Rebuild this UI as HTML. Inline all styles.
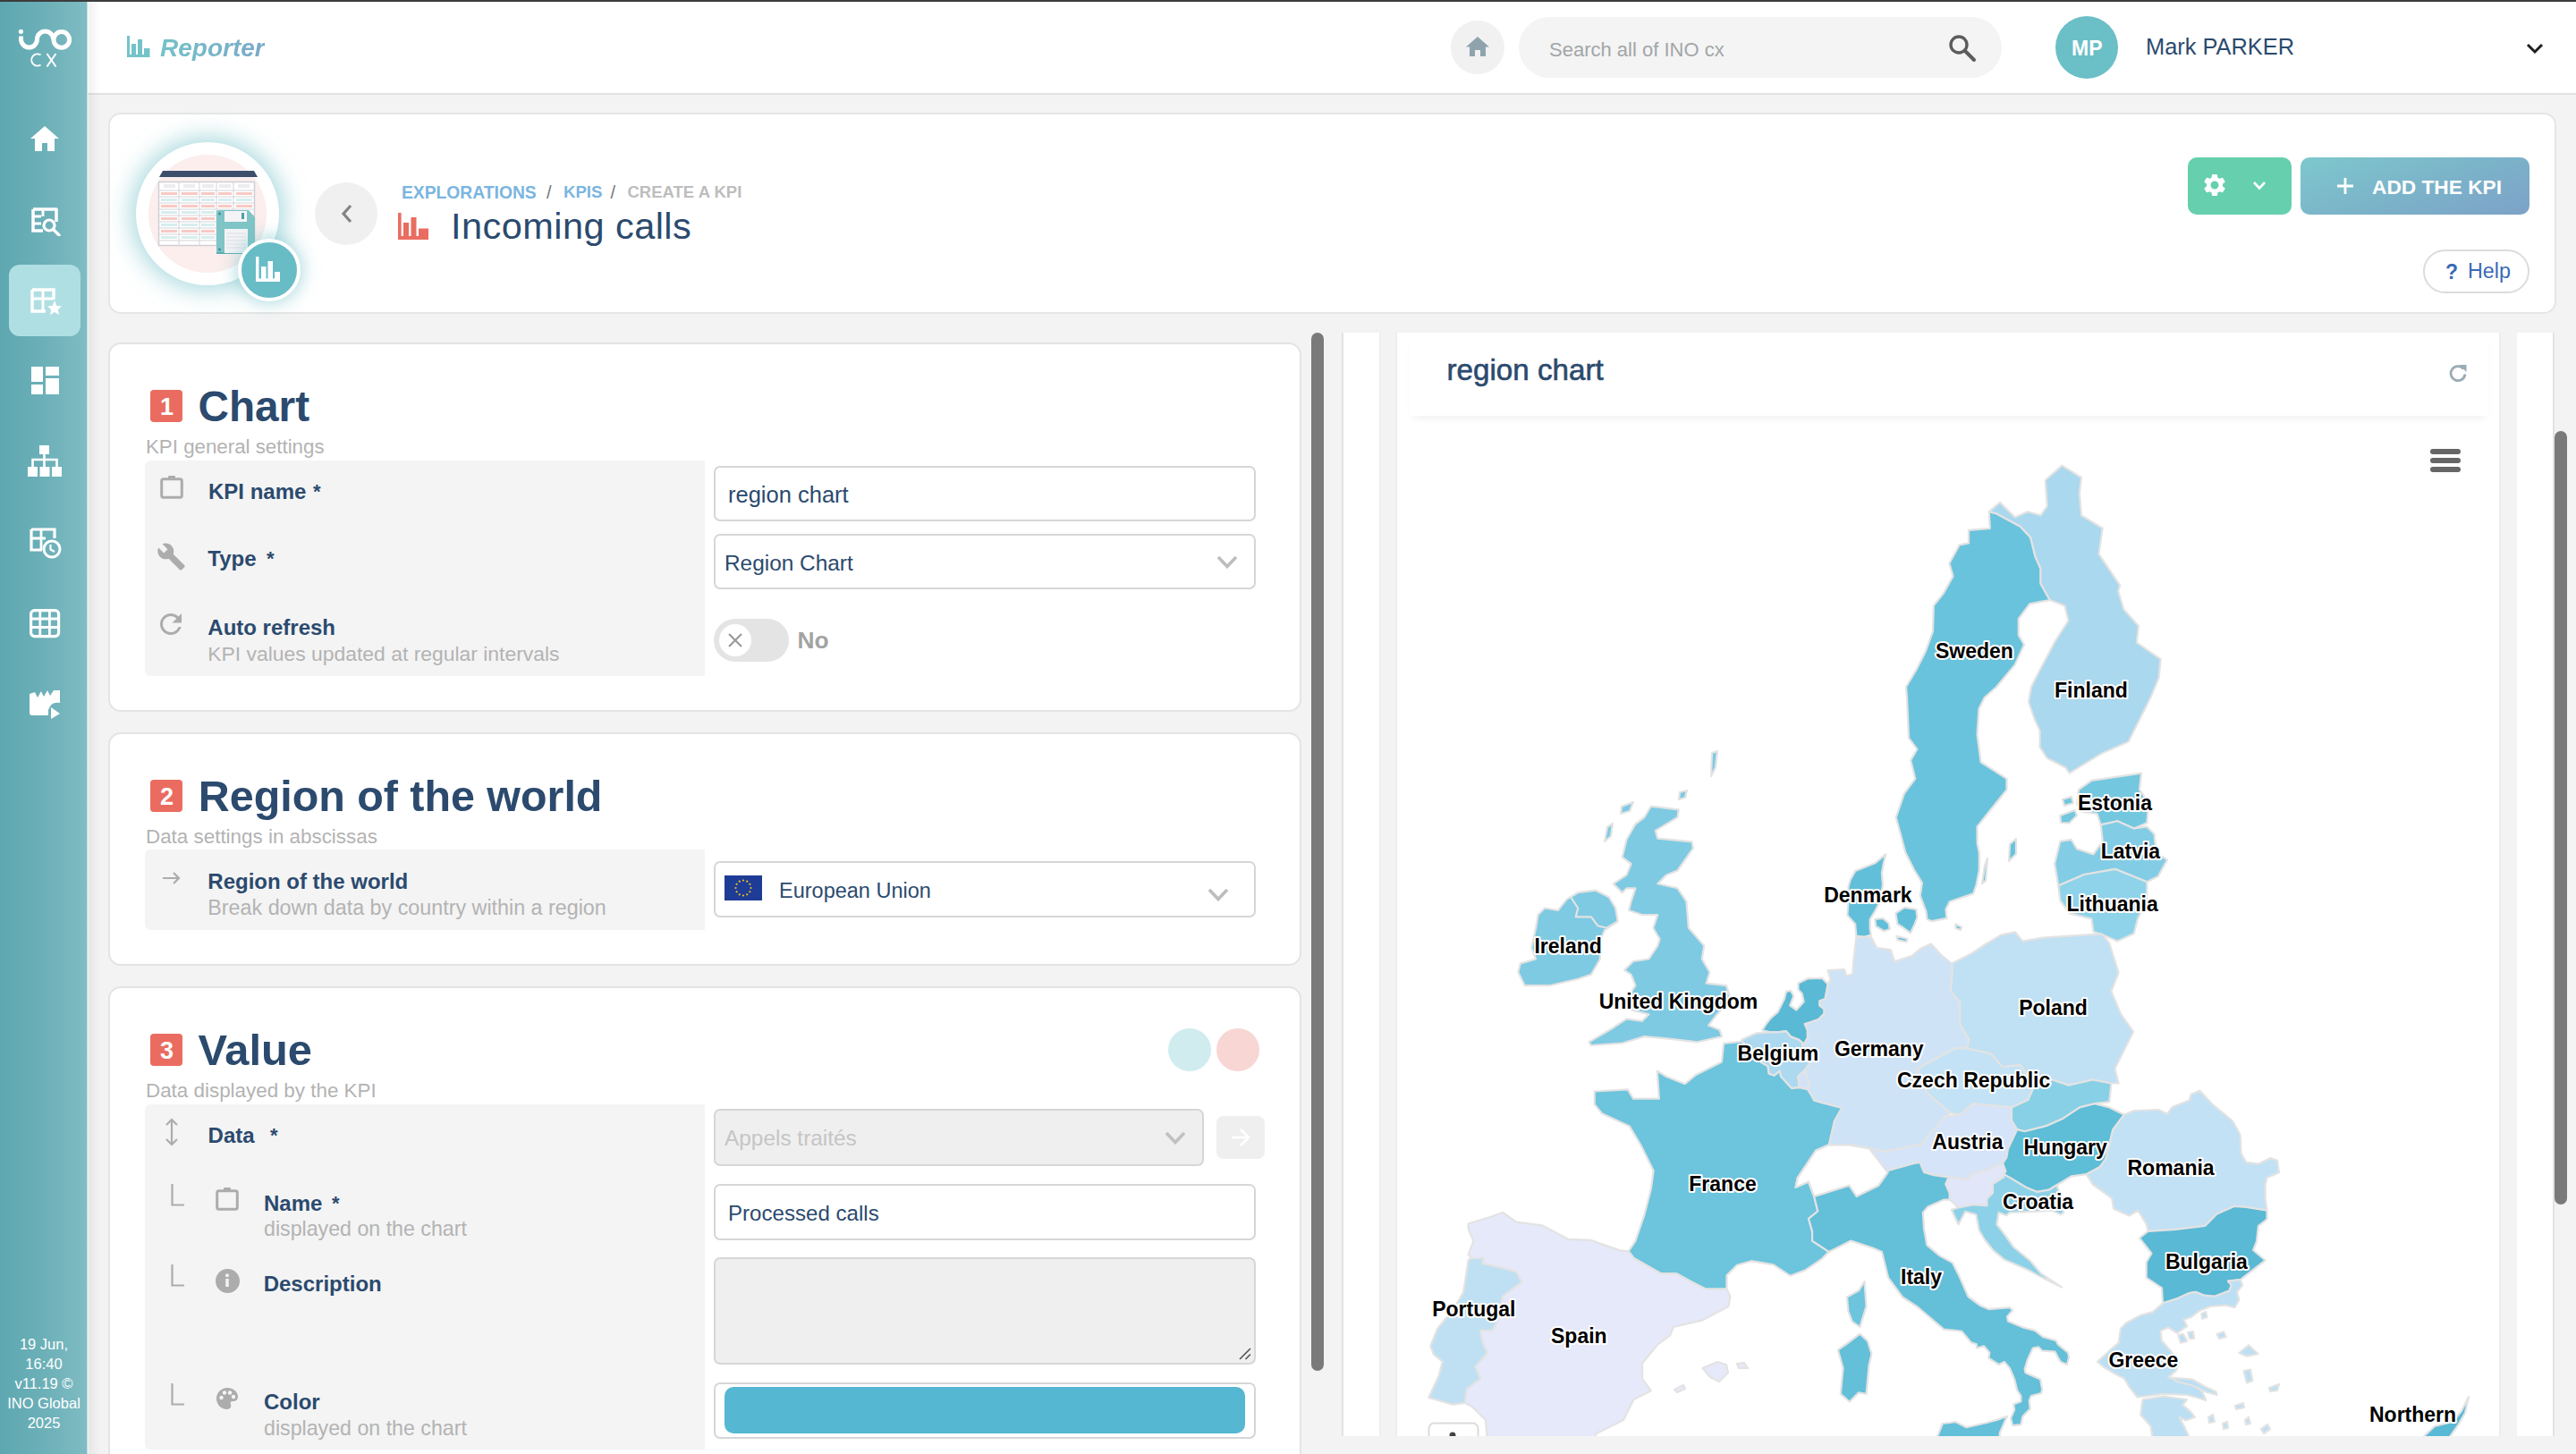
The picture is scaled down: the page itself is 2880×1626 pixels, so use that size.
<!DOCTYPE html><html><head><meta charset="utf-8"><style>
html,body{margin:0;padding:0;}
body{width:2880px;height:1626px;overflow:hidden;position:relative;background:#f3f3f3;font-family:"Liberation Sans",sans-serif;}
.a{position:absolute;box-sizing:border-box;}
.t{position:absolute;white-space:nowrap;line-height:1;}
</style></head><body><div class="a" style="left:0.0px;top:0.0px;width:2880.0px;height:2.0px;background:#3c3c3c"></div><div class="a" style="left:98.0px;top:2.0px;width:2782.0px;height:102.0px;background:#fff"></div><div class="a" style="left:98.0px;top:104.0px;width:2782.0px;height:2.0px;background:#e2e2e2"></div><div class="a" style="left:98.0px;top:2.0px;width:14.0px;height:1624.0px;background:linear-gradient(to right,rgba(0,0,0,0.06),rgba(0,0,0,0))"></div><div class="a" style="left:0.0px;top:2.0px;width:98.0px;height:1624.0px;background:linear-gradient(to right,#5ea7b0 0%,#6cb0b8 50%,#80bcc3 100%)"></div><div class="a" style="left:97.0px;top:2.0px;width:2.0px;height:1624.0px;background:rgba(255,255,255,0.5)"></div><svg class="a" style="left:10px;top:25px;" width="80" height="60" viewBox="10 25 80 60">
<g fill="none" stroke="#fff" stroke-width="5">
<path d="M23.5 40.5 V44 A9 9 0 0 0 41.5 44 A9 9 0 0 1 59.5 44" />
<circle cx="68.8" cy="44.4" r="8.8"/>
</g>
<circle cx="23.4" cy="35.3" r="2.6" fill="#fff"/>
<path d="M45.5 61.5 A6.6 6.6 0 1 0 45.5 72.5" fill="none" stroke="#fff" stroke-width="2"/>
<path d="M52.5 60 L62.5 74.5 M62.5 60 L52.5 74.5" stroke="#fff" stroke-width="2"/>
</svg><svg class="a" style="left:33px;top:140px;" width="34" height="30" viewBox="0 0 34 30"><path d="M17 1 L33 15 L28 15 L28 29 L20 29 L20 20 L14 20 L14 29 L6 29 L6 15 L1 15 Z" fill="#fff"/></svg><svg class="a" style="left:34px;top:231px;" width="34" height="33" viewBox="0 0 34 33"><path d="M3 3 H29 V17" fill="none" stroke="#fff" stroke-width="3.5" stroke-linejoin="round"/>
<path d="M3 3 V27 H14" fill="none" stroke="#fff" stroke-width="3.5"/>
<path d="M3 11 H12 M3 19 H12 M14 3 V11" stroke="#fff" stroke-width="3"/>
<circle cx="21" cy="21" r="6" fill="none" stroke="#fff" stroke-width="3.2"/>
<path d="M25.5 25.5 L32 32" stroke="#fff" stroke-width="3.4" stroke-linecap="round"/></svg><div class="a" style="left:10.0px;top:296.0px;width:80.0px;height:80.0px;background:#b0dfe3;border-radius:12px"></div><svg class="a" style="left:33px;top:321px;" width="36" height="32" viewBox="0 0 36 32"><path d="M3 3 H27 V14" fill="none" stroke="#fff" stroke-width="3.4"/>
<path d="M3 3 V27 H18" fill="none" stroke="#fff" stroke-width="3.4"/>
<path d="M3 13 H27 M15 3 V27" stroke="#fff" stroke-width="3"/>
<path d="M28 15 L30.4 21 L36 21.5 L31.8 25.3 L33 31 L28 28 L23 31 L24.2 25.3 L20 21.5 L25.6 21 Z" fill="#fff"/></svg><svg class="a" style="left:35px;top:410px;" width="31" height="32" viewBox="0 0 31 32"><rect x="0" y="0" width="13" height="17" fill="#fff"/><rect x="16" y="0" width="15" height="10" fill="#fff"/><rect x="0" y="20" width="13" height="11" fill="#fff"/><rect x="16" y="13" width="15" height="18" fill="#fff"/></svg><svg class="a" style="left:31px;top:498px;" width="38" height="36" viewBox="0 0 38 36"><rect x="13" y="0" width="11" height="10" fill="#fff"/>
<rect x="0" y="24" width="11" height="11" fill="#fff"/><rect x="13.5" y="24" width="11" height="11" fill="#fff"/><rect x="27" y="24" width="11" height="11" fill="#fff"/>
<path d="M18.5 9 V24 M5.5 24 V16 H32.5 V24" fill="none" stroke="#fff" stroke-width="2.6"/></svg><svg class="a" style="left:33px;top:590px;" width="36" height="35" viewBox="0 0 36 35"><path d="M2 2 H28 V12" fill="none" stroke="#fff" stroke-width="3.2"/>
<path d="M2 2 V25 H14" fill="none" stroke="#fff" stroke-width="3.2"/>
<path d="M2 12 H18 M13 2 V25" stroke="#fff" stroke-width="2.8"/>
<circle cx="25" cy="24" r="9" fill="none" stroke="#fff" stroke-width="3"/>
<path d="M23.5 19 V24.5 L28 27" fill="none" stroke="#fff" stroke-width="2.2"/></svg><svg class="a" style="left:33px;top:681px;" width="35" height="33" viewBox="0 0 35 33"><rect x="1.6" y="1.6" width="31" height="29" rx="4" fill="none" stroke="#fff" stroke-width="3.2"/>
<path d="M1.6 11 H32.6 M1.6 20.5 H32.6 M11.8 1.6 V30.6 M22.4 1.6 V30.6" stroke="#fff" stroke-width="2.8"/></svg><svg class="a" style="left:33px;top:772px;" width="35" height="32" viewBox="0 0 35 32"><path d="M0 4 L6 2 L9 8 L13 1 L16 7 L20 0 L23 6 L27 0 L34 0 L34 14 Q24 12 21 22 L21 28 L3 28 Q0 28 0 25 Z" fill="#fff"/>
<path d="M24 19 L34 26 L24 32 Z" fill="#fff"/></svg><div class="t" style="left:0;width:98px;text-align:center;top:1495.1px;font-size:16.5px;color:#fff">19 Jun,</div><div class="t" style="left:0;width:98px;text-align:center;top:1517.0px;font-size:16.5px;color:#fff">16:40</div><div class="t" style="left:0;width:98px;text-align:center;top:1538.9px;font-size:16.5px;color:#fff">v11.19 ©</div><div class="t" style="left:0;width:98px;text-align:center;top:1560.8px;font-size:16.5px;color:#fff">INO Global</div><div class="t" style="left:0;width:98px;text-align:center;top:1582.7px;font-size:16.5px;color:#fff">2025</div><svg class="a" style="left:142px;top:40px;" width="26" height="24" viewBox="0 0 26 24"><path d="M0 0 H3 V21 H5 V9 H10 V21 H12 V4 H17 V21 H19 V14 H25.5 V24 H0 Z" fill="#73c3c9"/></svg><div class="t" style="left:179px;top:39.8px;font-size:28px;font-weight:bold;font-style:italic;background:linear-gradient(to right,#74c2c8,#7aa8c9);-webkit-background-clip:text;background-clip:text;color:transparent;">Reporter</div><div class="a" style="left:1622.0px;top:23.0px;width:60.0px;height:60.0px;background:#f1f1f1;border-radius:50%"></div><svg class="a" style="left:1639px;top:41px;" width="26" height="22" viewBox="0 0 26 22"><path d="M13 0 L26 11.5 L22 11.5 L22 22 L16 22 L16 15 L10 15 L10 22 L4 22 L4 11.5 L0 11.5 Z" fill="#8fa3ad"/></svg><div class="a" style="left:1698.0px;top:19.0px;width:540.0px;height:68.0px;background:#f4f4f4;border-radius:34px"></div><div class="t" style="left:1732.0px;top:44.9px;font-size:22.00px;font-weight:normal;color:#a2a6a8;">Search all of INO cx</div><svg class="a" style="left:2178px;top:38px;" width="32" height="32" viewBox="0 0 32 32"><circle cx="12" cy="12" r="9" fill="none" stroke="#5c5c5c" stroke-width="3.4"/><path d="M18.5 18.5 L29 29" stroke="#5c5c5c" stroke-width="4" stroke-linecap="round"/></svg><div class="a" style="left:2298.0px;top:18.0px;width:70.0px;height:70.0px;background:#6bbfc7;border-radius:50%"></div><div class="t" style="left:2316.0px;top:42.9px;font-size:23.00px;font-weight:bold;color:#fff;">MP</div><div class="t" style="left:2399.0px;top:40.2px;font-size:25.40px;font-weight:normal;color:#2b4a6e;">Mark PARKER</div><svg class="a" style="left:2824px;top:47px;" width="20" height="14" viewBox="0 0 20 14"><path d="M2 3 L10 11 L18 3" fill="none" stroke="#1e1e1e" stroke-width="3"/></svg><div class="a" style="left:121.0px;top:126.0px;width:2737.0px;height:225.0px;background:#fff;border:2px solid #e6e6e6;border-radius:14px"></div><div class="a" style="left:152.0px;top:159.0px;width:160.0px;height:160.0px;background:#fff;border-radius:50%;box-shadow:0 0 26px 6px rgba(104,188,197,0.55)"></div><div class="a" style="left:166.0px;top:173.0px;width:132.0px;height:132.0px;background:#fbeeed;border-radius:50%"></div><svg class="a" style="left:174px;top:188px;" width="114" height="100" viewBox="0 0 114 100">
<path d="M8 3 H110 L114 10 H4 Z" fill="#3d4f6b"/>
<rect x="3.5" y="15.5" width="107" height="71" fill="#fff" stroke="#cfcfd6" stroke-width="1.5"/>
<g stroke="#d4d4da" stroke-width="1">
<path d="M26 15 V87 M49 15 V87 M68 15 V87 M87 15 V87"/>
<path d="M3 25 H111 M3 32 H111 M3 39 H111 M3 46 H111 M3 53 H111 M3 60 H111 M3 67 H111 M3 74 H111 M3 81 H111"/>
</g>
<g fill="#ececf0"><rect x="9" y="18" width="13" height="4"/><rect x="31" y="18" width="13" height="4"/><rect x="52" y="18" width="13" height="4"/><rect x="71" y="18" width="13" height="4"/><rect x="92" y="18" width="13" height="4"/></g>
<g fill="#f7c9c4"><rect x="6" y="27" width="18" height="3"/><rect x="29" y="27" width="18" height="3"/><rect x="51" y="27" width="15" height="3"/><rect x="70" y="27" width="15" height="3"/><rect x="90" y="27" width="18" height="3"/>
<rect x="6" y="41" width="18" height="3"/><rect x="29" y="41" width="18" height="3"/><rect x="51" y="41" width="15" height="3"/><rect x="70" y="41" width="15" height="3"/><rect x="90" y="41" width="18" height="3"/>
<rect x="6" y="55" width="18" height="3"/><rect x="29" y="55" width="18" height="3"/><rect x="51" y="55" width="15" height="3"/>
<rect x="6" y="69" width="18" height="3"/><rect x="29" y="69" width="18" height="3"/><rect x="51" y="69" width="15" height="3"/></g>
<g fill="#d7eeef"><rect x="6" y="34" width="18" height="3"/><rect x="29" y="34" width="18" height="3"/><rect x="51" y="34" width="15" height="3"/><rect x="70" y="34" width="15" height="3"/><rect x="90" y="34" width="18" height="3"/>
<rect x="6" y="48" width="18" height="3"/><rect x="29" y="48" width="18" height="3"/><rect x="51" y="48" width="15" height="3"/>
<rect x="6" y="62" width="18" height="3"/><rect x="29" y="62" width="18" height="3"/><rect x="51" y="62" width="15" height="3"/>
<rect x="6" y="76" width="18" height="3"/><rect x="29" y="76" width="18" height="3"/><rect x="51" y="76" width="15" height="3"/></g>
<path d="M68 49 Q68 47 70 47 H104 L111 55 V94 Q111 96 109 96 H70 Q68 96 68 94 Z" fill="#7fc4c6"/>
<path d="M68 94 H111 V96 H68 Z" fill="#5aaeb2"/>
<rect x="77" y="48" width="25" height="12" fill="#f4f4f6"/><rect x="96" y="50" width="3" height="7" fill="#4e9ea3"/>
<rect x="77" y="68" width="26" height="27" fill="#f4f4f6"/>
<g stroke="#dcdce2" stroke-width="0.8"><path d="M79 73 H101 M79 77 H101 M79 81 H101 M79 85 H101 M79 89 H101"/></g>
<circle cx="71.5" cy="51" r="1.5" fill="#3f8f94"/><circle cx="71.5" cy="91" r="1.5" fill="#3f8f94"/>
</svg><div class="a" style="left:266.0px;top:267.0px;width:70.0px;height:70.0px;background:#68bcc5;border:4px solid #fff;border-radius:50%;box-shadow:0 0 18px 3px rgba(104,188,197,0.5)"></div><svg class="a" style="left:286px;top:287px;" width="30" height="28" viewBox="0 0 30 28"><path d="M0 0 H3.4 V24.5 H6 V11 H11.5 V24.5 H13.5 V5 H19 V24.5 H21 V17 H27 V28 H0 Z" fill="#fff"/></svg><div class="a" style="left:352.0px;top:204.0px;width:70.0px;height:70.0px;background:#f0f0f0;border-radius:50%"></div><svg class="a" style="left:380px;top:228px;" width="16" height="22" viewBox="0 0 16 22"><path d="M12 2 L4 11 L12 20" fill="none" stroke="#838383" stroke-width="3.2"/></svg><div class="t" style="left:449.0px;top:205.5px;font-size:19.30px;font-weight:bold;color:#7ab5df;">EXPLORATIONS</div><div class="t" style="left:611.0px;top:204.9px;font-size:20.00px;font-weight:normal;color:#767676;">/</div><div class="t" style="left:630.0px;top:206.1px;font-size:18.60px;font-weight:bold;color:#7ab5df;">KPIS</div><div class="t" style="left:682.5px;top:204.9px;font-size:20.00px;font-weight:normal;color:#767676;">/</div><div class="t" style="left:701.5px;top:206.1px;font-size:18.50px;font-weight:bold;color:#bdbdbd;">CREATE A KPI</div><svg class="a" style="left:445px;top:238px;" width="35" height="31" viewBox="0 0 35 31"><path d="M0 0 H3.6 V26 H6 V11 H12 V26 H14.5 V5 H20.5 V26 H23 V17.5 H34 V30 H0 Z" fill="#ea6c60"/></svg><div class="t" style="left:504.0px;top:232.3px;font-size:41.50px;font-weight:normal;color:#2b4a6e;letter-spacing:0.45px;">Incoming calls</div><div class="a" style="left:2446.0px;top:176.0px;width:116.0px;height:64.0px;background:#65cfae;border-radius:10px"></div><svg class="a" style="left:2461px;top:192px;" width="30" height="30" viewBox="0 0 30 30"><path transform="scale(1.25)" fill="#fff" d="M19.14 12.94c.04-.3.06-.61.06-.94 0-.32-.02-.64-.07-.94l2.03-1.58c.18-.14.23-.41.12-.61l-1.92-3.32c-.12-.22-.37-.29-.59-.22l-2.39.96c-.5-.38-1.03-.7-1.62-.94l-.36-2.54c-.04-.24-.24-.41-.48-.41h-3.84c-.24 0-.43.17-.47.41l-.36 2.54c-.59.24-1.13.57-1.62.94l-2.39-.96c-.22-.08-.47 0-.59.22L2.74 8.87c-.12.21-.08.47.12.61l2.03 1.58c-.05.3-.09.63-.09.94s.02.64.07.94l-2.03 1.58c-.18.14-.23.41-.12.61l1.92 3.32c.12.22.37.29.59.22l2.39-.96c.5.38 1.03.7 1.62.94l.36 2.54c.05.24.24.41.48.41h3.840c.24 0 .44-.17.47-.41l.36-2.54c.59-.24 1.13-.56 1.62-.94l2.39.96c.22.08.47 0 .59-.22l1.92-3.32c.12-.22.07-.47-.12-.61l-2.01-1.58zM12 15.6c-1.98 0-3.6-1.62-3.6-3.6s1.62-3.6 3.6-3.6 3.6 1.62 3.6 3.6-1.62 3.6-3.6 3.6z"/></svg><svg class="a" style="left:2518px;top:202px;" width="16" height="12" viewBox="0 0 16 12"><path d="M2 2 L8 8.5 L14 2" fill="none" stroke="#fff" stroke-width="2.6"/></svg><div class="a" style="left:2572.0px;top:176.0px;width:256.0px;height:64.0px;background:linear-gradient(160deg,#7ec8cd 0%,#7bb4c9 50%,#7da2c8 100%);border-radius:10px"></div><svg class="a" style="left:2612px;top:198px;" width="20" height="20" viewBox="0 0 20 20"><path d="M10 1 V19 M1 10 H19" stroke="#fff" stroke-width="2.8"/></svg><div class="t" style="left:2652.0px;top:197.8px;font-size:22.70px;font-weight:bold;color:#fff;">ADD THE KPI</div><div class="a" style="left:2709.0px;top:279.0px;width:119.0px;height:49.0px;background:#fff;border:2px solid #dcdcdc;border-radius:25px"></div><div class="t" style="left:2734.0px;top:292.5px;font-size:23.00px;font-weight:bold;color:#3a6ab5;">?</div><div class="t" style="left:2759.0px;top:292.3px;font-size:23.30px;font-weight:normal;color:#3a6ab5;">Help</div><div class="a" style="left:1466.0px;top:372.0px;width:14.0px;height:1161.0px;background:#7a7a7a;border-radius:7px"></div><div class="a" style="left:121.0px;top:383.0px;width:1334.0px;height:413.0px;background:#fff;border:2px solid #e4e4e4;border-radius:14px"></div><div class="a" style="left:168.0px;top:436.0px;width:36.0px;height:36.0px;background:#ea6c60;border-radius:4px"></div><div class="t" style="left:179.0px;top:441.6px;font-size:27.00px;font-weight:bold;color:#fff;">1</div><div class="t" style="left:221.5px;top:431.2px;font-size:47.70px;font-weight:bold;color:#2b4a6e;">Chart</div><div class="t" style="left:163.0px;top:489.1px;font-size:22.30px;font-weight:normal;color:#b3b3b3;">KPI general settings</div><div class="a" style="left:162.0px;top:514.5px;width:626.0px;height:241.0px;background:#f4f4f4;border-radius:6px 0 0 6px"></div><svg class="a" style="left:179px;top:531px;" width="26" height="27" viewBox="0 0 26 27"><rect x="1.7" y="4.7" width="22.6" height="20.6" rx="2" fill="none" stroke="#acacac" stroke-width="3"/><rect x="9" y="1" width="8" height="5" rx="1" fill="#acacac"/></svg><div class="t" style="left:233.0px;top:537.7px;font-size:24.00px;font-weight:bold;color:#2b4a6e;">KPI name</div><div class="t" style="left:350.0px;top:539.4px;font-size:22.00px;font-weight:bold;color:#2b4a6e;">*</div><svg class="a" style="left:175px;top:606px;" width="34" height="34" viewBox="0 0 34 34"><path transform="scale(1.38)" d="M22.7 19l-9.1-9.1c.9-2.3.4-5-1.5-6.9-2-2-5-2.4-7.4-1.3L9 6 6 9 1.6 4.7C.4 7.1.9 10.1 2.9 12.1c1.9 1.9 4.6 2.4 6.9 1.5l9.1 9.1c.4.4 1 .4 1.4 0l2.3-2.3c.5-.4.5-1.1.1-1.4z" fill="#acacac"/></svg><div class="t" style="left:232.3px;top:612.7px;font-size:24.00px;font-weight:bold;color:#2b4a6e;">Type</div><div class="t" style="left:298.0px;top:614.4px;font-size:22.00px;font-weight:bold;color:#2b4a6e;">*</div><svg class="a" style="left:173px;top:680px;" width="36" height="36" viewBox="0 0 36 36"><path transform="translate(0,0) scale(1.5)" d="M17.65 6.35C16.2 4.9 14.21 4 12 4c-4.42 0-7.99 3.58-7.99 8s3.57 8 7.99 8c3.73 0 6.84-2.55 7.73-6h-2.08c-.82 2.33-3.04 4-5.65 4-3.31 0-6-2.69-6-6s2.69-6 6-6c1.66 0 3.14.69 4.22 1.78L13 11h7V4l-2.35 2.35z" fill="#acacac"/></svg><div class="t" style="left:232.3px;top:689.7px;font-size:24.00px;font-weight:bold;color:#2b4a6e;">Auto refresh</div><div class="t" style="left:232.3px;top:720.4px;font-size:22.90px;font-weight:normal;color:#b3b3b3;">KPI values updated at regular intervals</div><div class="a" style="left:798.0px;top:520.5px;width:606.0px;height:62.5px;background:#fff;border:2px solid #d6d6d6;border-radius:7px"></div><div class="t" style="left:814.0px;top:540.9px;font-size:25.50px;font-weight:normal;color:#2b4a6e;">region chart</div><div class="a" style="left:798.0px;top:596.5px;width:606.0px;height:62.5px;background:#fff;border:2px solid #d6d6d6;border-radius:7px"></div><div class="t" style="left:810.0px;top:617.9px;font-size:24.40px;font-weight:normal;color:#2b4a6e;">Region Chart</div><svg class="a" style="left:1360px;top:621px;" width="24" height="15" viewBox="0 0 24 15"><path d="M2 2 L12.0 12.5 L22 2" fill="none" stroke="#bdbdbd" stroke-width="3.6"/></svg><div class="a" style="left:798.0px;top:692.0px;width:84.0px;height:48.0px;background:#e4e4e4;border-radius:24px"></div><div class="a" style="left:804.0px;top:698.0px;width:36.0px;height:36.0px;background:#fff;border-radius:50%"></div><svg class="a" style="left:812px;top:706px;" width="20" height="20" viewBox="0 0 20 20"><path d="M3 3 L17 17 M17 3 L3 17" stroke="#9a9a9a" stroke-width="2.2"/></svg><div class="t" style="left:891.5px;top:703.2px;font-size:26.40px;font-weight:bold;color:#a3a3a3;">No</div><div class="a" style="left:121.0px;top:819.0px;width:1334.0px;height:261.0px;background:#fff;border:2px solid #e4e4e4;border-radius:14px"></div><div class="a" style="left:168.0px;top:872.0px;width:36.0px;height:36.0px;background:#ea6c60;border-radius:4px"></div><div class="t" style="left:179.0px;top:877.6px;font-size:27.00px;font-weight:bold;color:#fff;">2</div><div class="t" style="left:221.8px;top:865.8px;font-size:48.40px;font-weight:bold;color:#2b4a6e;">Region of the world</div><div class="t" style="left:163.0px;top:925.0px;font-size:22.40px;font-weight:normal;color:#b3b3b3;">Data settings in abscissas</div><div class="a" style="left:162.0px;top:950.0px;width:626.0px;height:90.0px;background:#f4f4f4;border-radius:6px 0 0 6px"></div><svg class="a" style="left:181px;top:974px;" width="22" height="16" viewBox="0 0 22 16"><path d="M1 8 H19 M13 2 L19 8 L13 14" fill="none" stroke="#acacac" stroke-width="2.2"/></svg><div class="t" style="left:232.3px;top:974.3px;font-size:24.00px;font-weight:bold;color:#2b4a6e;">Region of the world</div><div class="t" style="left:232.3px;top:1004.3px;font-size:23.30px;font-weight:normal;color:#b3b3b3;">Break down data by country within a region</div><div class="a" style="left:798.0px;top:963.0px;width:606.0px;height:63.0px;background:#fff;border:2px solid #d6d6d6;border-radius:7px"></div><svg class="a" style="left:810px;top:979px;" width="42" height="28" viewBox="0 0 42 28"><rect width="42" height="28" fill="#1e3c96"/><circle cx="29.50" cy="14.00" r="1.1" fill="#f0c419"/><circle cx="28.36" cy="18.25" r="1.1" fill="#f0c419"/><circle cx="25.25" cy="21.36" r="1.1" fill="#f0c419"/><circle cx="21.00" cy="22.50" r="1.1" fill="#f0c419"/><circle cx="16.75" cy="21.36" r="1.1" fill="#f0c419"/><circle cx="13.64" cy="18.25" r="1.1" fill="#f0c419"/><circle cx="12.50" cy="14.00" r="1.1" fill="#f0c419"/><circle cx="13.64" cy="9.75" r="1.1" fill="#f0c419"/><circle cx="16.75" cy="6.64" r="1.1" fill="#f0c419"/><circle cx="21.00" cy="5.50" r="1.1" fill="#f0c419"/><circle cx="25.25" cy="6.64" r="1.1" fill="#f0c419"/><circle cx="28.36" cy="9.75" r="1.1" fill="#f0c419"/></svg><div class="t" style="left:871.0px;top:984.6px;font-size:23.50px;font-weight:normal;color:#2b4a6e;">European Union</div><svg class="a" style="left:1350px;top:993px;" width="24" height="15" viewBox="0 0 24 15"><path d="M2 2 L12.0 12.5 L22 2" fill="none" stroke="#bdbdbd" stroke-width="3.6"/></svg><div class="a" style="left:121.0px;top:1103.0px;width:1334.0px;height:557.0px;background:#fff;border:2px solid #e4e4e4;border-radius:14px"></div><div class="a" style="left:168.0px;top:1156.0px;width:36.0px;height:36.0px;background:#ea6c60;border-radius:4px"></div><div class="t" style="left:179.0px;top:1161.6px;font-size:27.00px;font-weight:bold;color:#fff;">3</div><div class="t" style="left:221.5px;top:1150.2px;font-size:48.80px;font-weight:bold;color:#2b4a6e;">Value</div><div class="t" style="left:163.0px;top:1209.0px;font-size:22.40px;font-weight:normal;color:#b3b3b3;">Data displayed by the KPI</div><div class="a" style="left:1306.0px;top:1150.0px;width:48.0px;height:48.0px;background:#d0ecef;border-radius:50%"></div><div class="a" style="left:1360.0px;top:1150.0px;width:48.0px;height:48.0px;background:#f7d6d3;border-radius:50%"></div><div class="a" style="left:162.0px;top:1234.5px;width:626.0px;height:386.5px;background:#f4f4f4;border-radius:6px 0 0 6px"></div><svg class="a" style="left:183px;top:1250px;" width="18" height="32" viewBox="0 0 18 32"><path d="M9 2 V30 M3 8 L9 2 L15 8 M3 24 L9 30 L15 24" fill="none" stroke="#acacac" stroke-width="2.2"/></svg><div class="t" style="left:232.6px;top:1257.7px;font-size:24.00px;font-weight:bold;color:#2b4a6e;">Data</div><div class="t" style="left:302.0px;top:1259.4px;font-size:22.00px;font-weight:bold;color:#2b4a6e;">*</div><div class="a" style="left:798.0px;top:1240.0px;width:548.0px;height:64.0px;background:#efefef;border:2px solid #d6d6d6;border-radius:7px"></div><div class="t" style="left:810.0px;top:1261.3px;font-size:24.40px;font-weight:normal;color:#c5c5c5;">Appels traités</div><svg class="a" style="left:1302px;top:1265px;" width="24" height="15" viewBox="0 0 24 15"><path d="M2 2 L12.0 12.5 L22 2" fill="none" stroke="#c0c0c0" stroke-width="3.6"/></svg><div class="a" style="left:1360.0px;top:1248.0px;width:54.0px;height:48.0px;background:#efefef;border-radius:8px"></div><svg class="a" style="left:1375px;top:1261px;" width="24" height="22" viewBox="0 0 24 22"><path d="M2 11 H21 M12 2 L21 11 L12 20" fill="none" stroke="#fff" stroke-width="2.6"/></svg><svg class="a" style="left:191px;top:1324px;" width="16" height="25" viewBox="0 0 16 25"><path d="M1.5 0 V23.5 H15" fill="none" stroke="#acacac" stroke-width="2.2"/></svg><svg class="a" style="left:241px;top:1327px;" width="26" height="27" viewBox="0 0 26 27"><rect x="1.7" y="4.7" width="22.6" height="20.6" rx="2" fill="none" stroke="#acacac" stroke-width="3"/><rect x="9" y="1" width="8" height="5" rx="1" fill="#acacac"/></svg><div class="t" style="left:295.0px;top:1333.6px;font-size:24.00px;font-weight:bold;color:#2b4a6e;">Name</div><div class="t" style="left:371.0px;top:1335.3px;font-size:22.00px;font-weight:bold;color:#2b4a6e;">*</div><div class="t" style="left:295.0px;top:1363.2px;font-size:23.20px;font-weight:normal;color:#b3b3b3;">displayed on the chart</div><div class="a" style="left:798.0px;top:1323.5px;width:606.0px;height:63.0px;background:#fff;border:2px solid #d6d6d6;border-radius:7px"></div><div class="t" style="left:814.0px;top:1344.6px;font-size:24.10px;font-weight:normal;color:#2b4a6e;">Processed calls</div><svg class="a" style="left:191px;top:1414px;" width="16" height="25" viewBox="0 0 16 25"><path d="M1.5 0 V23.5 H15" fill="none" stroke="#acacac" stroke-width="2.2"/></svg><div class="a" style="left:240.5px;top:1418.5px;width:27.0px;height:27.0px;background:#acacac;border-radius:50%"></div><svg class="a" style="left:240px;top:1418px;" width="28" height="28" viewBox="0 0 28 28"><rect x="12.3" y="12" width="3.4" height="9" fill="#f4f4f4"/><circle cx="14" cy="8.3" r="2" fill="#f4f4f4"/></svg><div class="t" style="left:294.7px;top:1424.3px;font-size:24.00px;font-weight:bold;color:#2b4a6e;">Description</div><div class="a" style="left:798.0px;top:1406.0px;width:606.0px;height:119.5px;background:#efefef;border:2px solid #d6d6d6;border-radius:7px"></div><svg class="a" style="left:1384px;top:1506px;" width="16" height="16" viewBox="0 0 16 16"><path d="M2 14 L14 2 M8.5 14 L14 8.5" stroke="#555" stroke-width="1.6"/></svg><svg class="a" style="left:191px;top:1546.5px;" width="16" height="25" viewBox="0 0 16 25"><path d="M1.5 0 V23.5 H15" fill="none" stroke="#acacac" stroke-width="2.2"/></svg><svg class="a" style="left:241px;top:1551px;" width="26" height="26" viewBox="0 0 26 26"><path d="M13 1 C20 1 25 5.5 25 11 C25 15 22 16 19.5 16 C17 16 16 17.5 17 19.5 C18 22 16.5 25 13 25 C6 25 1 19.5 1 13 C1 6.5 6.5 1 13 1 Z" fill="#acacac"/><circle cx="6.5" cy="12" r="2.2" fill="#f4f4f4"/><circle cx="10" cy="6.5" r="2.2" fill="#f4f4f4"/><circle cx="16" cy="6.5" r="2.2" fill="#f4f4f4"/><circle cx="20" cy="11" r="2.2" fill="#f4f4f4"/></svg><div class="t" style="left:295.0px;top:1556.0px;font-size:24.00px;font-weight:bold;color:#2b4a6e;">Color</div><div class="t" style="left:295.0px;top:1586.0px;font-size:23.20px;font-weight:normal;color:#b3b3b3;">displayed on the chart</div><div class="a" style="left:798.0px;top:1545.5px;width:606.0px;height:63.5px;background:#fff;border:2px solid #d6d6d6;border-radius:7px"></div><div class="a" style="left:810.0px;top:1551.0px;width:582.0px;height:52.0px;background:#55b7d1;border-radius:10px"></div><div class="a" style="left:1500.0px;top:372.0px;width:1356.0px;height:1234.0px;background:#fff;border-left:2px solid #e2e2e2;border-right:2px solid #e2e2e2"></div><div class="a" style="left:1542.0px;top:372.0px;width:20.0px;height:1234.0px;background:#f3f3f3;box-shadow:inset -3px 0 3px -2px rgba(0,0,0,0.05), inset 3px 0 3px -2px rgba(0,0,0,0.04)"></div><div class="a" style="left:2794.0px;top:372.0px;width:20.0px;height:1234.0px;background:#f3f3f3;box-shadow:inset 3px 0 3px -2px rgba(0,0,0,0.05)"></div><div class="a" style="left:2856.0px;top:482.0px;width:14.0px;height:865.0px;background:#7a7a7a;border-radius:7px"></div><div class="a" style="left:1576.0px;top:372.0px;width:1206.0px;height:93.0px;background:#fff;box-shadow:0 6px 10px -4px rgba(0,0,0,0.07)"></div><div class="t" style="left:1617.5px;top:396.6px;font-size:33.20px;font-weight:normal;color:#2b4a6e;-webkit-text-stroke:0.6px #2b4a6e;">region chart</div><svg class="a" style="left:2736px;top:405px;" width="24" height="24" viewBox="0 0 24 24"><path d="M18.2 7.5 A8 8 0 1 0 20 13.5" fill="none" stroke="#9aacb5" stroke-width="2.8"/><path d="M13.5 3 L21.5 3 L21.5 11 Z" fill="#9aacb5"/></svg><svg class="a" style="left:2716px;top:500px;" width="36" height="30" viewBox="0 0 36 30"><g stroke="#666" stroke-width="6" stroke-linecap="round"><path d="M4 5 H32 M4 15 H32 M4 25 H32"/></g></svg><svg class="a" style="left:1562px;top:372px" width="1232" height="1234" viewBox="1562 372 1232 1234"><g stroke="#e3e3e3" stroke-width="2.2" stroke-linejoin="round"><polygon points="2223.8,572.2 2232.0,574.3 2258.8,588.7 2270.2,601.0 2275.3,621.7 2281.5,636.0 2281.5,652.7 2291.8,671.0 2269.2,675.3 2256.8,692.0 2256.8,710.4 2263.0,720.7 2252.7,743.4 2232.0,768.2 2218.7,780.0 2212.5,792.4 2210.5,821.3 2214.6,852.2 2243.5,870.8 2243.5,883.2 2227.0,903.8 2210.5,924.4 2210.6,943.3 2212.8,953.2 2212.8,973.0 2209.5,989.5 2206.2,999.4 2199.6,1001.6 2179.8,1008.2 2175.4,1017.0 2176.5,1026.9 2160.0,1030.2 2154.5,1028.0 2153.4,1019.2 2146.8,1001.6 2149.0,987.3 2140.2,973.0 2130.3,953.2 2125.9,936.8 2119.7,914.1 2129.0,887.3 2141.3,870.8 2136.2,850.2 2143.4,837.8 2134.1,825.4 2132.0,780.0 2131.0,768.2 2143.3,747.6 2152.6,729.0 2160.9,706.3 2161.9,677.4 2173.2,663.0 2183.5,644.4 2179.4,630.0 2190.8,609.3 2201.0,607.3 2201.0,592.8 2224.8,590.8" fill="#6ac3dc"/><polygon points="2305.3,520.6 2326.9,534.0 2324.9,551.6 2326.9,576.3 2350.6,590.8 2346.5,619.6 2370.2,654.7 2368.2,661.0 2374.4,681.5 2390.9,700.0 2388.8,718.7 2415.6,737.2 2413.6,757.9 2404.4,780.0 2379.6,829.5 2350.8,841.9 2313.6,864.6 2309.5,858.4 2288.9,848.1 2280.6,835.7 2280.6,817.1 2275.0,805.0 2268.0,785.0 2271.0,768.0 2281.5,747.6 2298.0,716.6 2312.5,694.0 2308.4,677.4 2291.8,671.0 2281.5,652.7 2281.5,636.0 2275.3,621.7 2270.2,601.0 2258.8,588.7 2232.0,574.3 2223.8,572.2 2236.0,561.9 2252.7,578.4 2267.0,572.2 2281.5,576.3 2288.8,566.0 2286.7,537.0" fill="#aad8ee"/><polygon points="2324.0,883.2 2338.4,872.8 2394.0,864.6 2392.0,883.2 2402.3,897.6 2400.3,920.3 2385.8,926.5 2367.3,918.2 2348.7,922.4 2344.6,910.0 2328.0,907.9 2321.9,899.7" fill="#73c7df"/><polygon points="2303.3,912.0 2319.8,906.0 2322.0,912.0 2313.6,920.3 2304.0,920.0" fill="#73c7df"/><polygon points="2306.0,894.0 2316.0,891.0 2318.0,898.0 2308.0,901.0" fill="#73c7df"/><polygon points="2348.7,922.4 2367.3,918.2 2385.8,926.5 2400.3,924.4 2408.5,932.7 2410.6,953.3 2423.0,961.6 2412.7,980.1 2400.3,986.3 2365.2,971.9 2330.1,978.0 2301.2,990.4 2297.1,965.7 2303.3,940.9 2315.7,938.9 2321.9,949.2 2340.4,955.4 2350.8,940.9" fill="#82cde5"/><polygon points="2301.2,990.4 2330.1,978.0 2365.2,971.9 2400.3,986.3 2400.3,1007.0 2390.0,1027.6 2385.8,1044.1 2367.3,1052.4 2350.0,1045.0 2340.4,1042.0 2338.4,1027.6 2313.6,1021.4 2303.3,1007.0" fill="#8fd3ea"/><polygon points="2108.3,955.4 2106.1,964.2 2103.9,976.3 2105.0,989.5 2101.7,1008.2 2096.2,1019.2 2090.7,1028.0 2090.7,1039.0 2091.8,1045.6 2084.1,1047.8 2075.3,1046.7 2074.2,1033.5 2065.4,1023.6 2066.5,1006.0 2066.5,991.7 2068.7,984.0 2074.2,974.1 2096.2,965.3 2102.8,959.8" fill="#62bfd9"/><polygon points="2119.3,1021.4 2129.2,1014.8 2142.4,1017.0 2143.5,1025.8 2140.2,1034.6 2135.8,1043.4 2127.0,1036.8 2121.5,1033.5" fill="#62bfd9"/><polygon points="2096.2,1028.0 2105.0,1026.9 2111.6,1032.4 2112.7,1039.0 2106.1,1041.2 2097.3,1035.7" fill="#62bfd9"/><polygon points="2120.4,1046.7 2132.5,1050.0 2131.4,1053.3 2121.5,1051.1" fill="#62bfd9"/><polygon points="2072.0,1077.5 2075.3,1047.8 2091.8,1047.8 2098.4,1060.0 2113.8,1062.1 2118.2,1075.3 2138.0,1068.7 2146.8,1061.0 2158.9,1055.5 2171.0,1068.7 2182.0,1077.5 2183.0,1083.6 2180.9,1108.4 2191.2,1120.8 2191.2,1145.5 2201.5,1162.0 2199.5,1172.3 2187.1,1172.3 2170.6,1180.6 2143.8,1195.0 2154.1,1221.9 2180.9,1244.5 2174.7,1248.7 2160.3,1265.2 2147.9,1279.6 2106.6,1287.9 2090.0,1284.4 2067.4,1280.3 2044.7,1280.3 2050.9,1253.5 2059.1,1239.0 2028.2,1230.8 2024.9,1224.4 2020.8,1218.2 2022.8,1211.0 2017.7,1196.6 2022.8,1189.3 2015.6,1170.8 2016.7,1167.7 2020.8,1160.5 2020.8,1152.2 2017.7,1145.0 2024.9,1142.9 2033.2,1139.8 2039.3,1133.6 2039.3,1128.5 2034.2,1124.4 2034.2,1119.2 2040.4,1117.1 2043.5,1100.6 2046.6,1095.5 2043.5,1085.2 2062.0,1084.0 2064.1,1091.3 2071.3,1089.3" fill="#cfe3f6"/><polygon points="2010.5,1099.6 2020.8,1094.4 2037.3,1093.9 2043.5,1100.6 2040.4,1117.1 2034.2,1119.2 2034.2,1124.4 2039.3,1128.5 2039.3,1133.6 2033.2,1139.8 2024.9,1142.9 2017.7,1145.0 2020.8,1152.2 2020.8,1160.5 2016.7,1167.7 2014.6,1165.6 2010.5,1162.5 2002.2,1159.4 1997.0,1153.2 1987.8,1154.3 1979.5,1154.3 1970.2,1152.2 1975.4,1144.0 1980.5,1137.8 1987.8,1131.6 1995.0,1117.1 1997.0,1108.9 2002.2,1107.9 2005.3,1114.0 2001.2,1124.4 2008.4,1129.5 2016.7,1120.2 2014.6,1111.0 2010.5,1106.8" fill="#5ab9d5"/><polygon points="1947.5,1162.5 1964.0,1155.3 1979.5,1154.3 1987.8,1154.3 1997.0,1153.2 2002.2,1159.4 2010.5,1162.5 2014.6,1165.6 2015.6,1170.8 2022.8,1189.3 2017.7,1196.6 2010.5,1203.8 2011.5,1216.2 2003.2,1217.2 1990.9,1203.8 1989.8,1197.6 1983.6,1202.8 1977.5,1200.7 1976.4,1192.4 1969.2,1188.3 1947.5,1164.6" fill="#acd9ef"/><polygon points="2010.5,1203.8 2017.7,1196.6 2022.8,1211.0 2020.8,1218.2 2011.5,1216.2" fill="#d3e3f7"/><polygon points="1927.1,1166.8 1947.5,1164.6 1969.2,1188.3 1976.4,1192.4 1977.5,1200.7 1983.6,1202.8 1989.8,1197.6 1990.9,1203.8 2003.2,1217.2 2011.5,1216.2 2020.8,1218.2 2024.9,1224.4 2028.2,1230.8 2059.1,1239.0 2050.9,1253.5 2044.7,1280.3 2030.2,1286.5 2009.6,1317.4 2007.6,1327.7 2022.0,1321.5 2028.2,1338.0 2032.3,1354.5 2022.0,1362.8 2026.1,1377.2 2026.1,1387.6 2044.7,1399.9 2036.4,1408.2 2017.9,1420.6 2001.4,1426.7 1982.8,1414.4 1958.0,1410.2 1942.0,1414.7 1930.5,1426.3 1930.5,1441.7 1907.4,1441.7 1892.0,1434.0 1874.7,1424.4 1857.3,1424.4 1826.5,1407.0 1820.7,1399.3 1828.4,1387.8 1838.4,1358.7 1845.8,1330.0 1848.7,1309.2 1834.3,1280.3 1821.9,1259.6 1791.0,1245.2 1782.7,1234.9 1782.7,1220.5 1819.8,1218.4 1826.0,1228.7 1854.9,1228.7 1852.8,1197.8 1863.1,1204.0 1883.8,1212.2 1896.2,1201.9 1925.0,1187.4" fill="#6cc4dd"/><polygon points="2084.5,1433.2 2086.6,1460.6 2079.4,1483.8 2070.8,1478.0 2066.4,1466.4 2065.0,1450.5 2078.0,1443.3" fill="#6cc4dd"/><polygon points="2030.2,1286.5 2044.7,1280.3 2067.4,1280.3 2090.0,1284.4 2110.7,1311.2 2100.4,1325.7 2075.6,1338.0 2067.4,1325.7 2028.2,1338.0 2022.0,1321.5 2007.6,1327.7 2009.6,1317.4" fill="#ffffff"/><polygon points="2090.0,1284.4 2106.6,1287.9 2147.9,1279.6 2160.3,1265.2 2174.7,1248.7 2191.2,1246.6 2205.7,1234.2 2249.0,1238.4 2249.0,1252.8 2255.2,1263.1 2244.9,1285.0 2243.4,1294.4 2239.0,1301.0 2233.5,1303.2 2223.6,1307.6 2206.0,1312.0 2199.4,1318.6 2178.5,1316.4 2162.0,1314.2 2151.0,1310.9 2146.6,1299.9 2140.0,1301.0 2109.5,1309.5 2110.7,1311.2" fill="#d5e4f8"/><polygon points="2143.8,1195.0 2170.6,1180.6 2187.1,1172.3 2199.5,1172.3 2226.3,1178.5 2238.7,1193.0 2259.3,1190.9 2267.5,1205.3 2273.7,1215.7 2267.5,1230.1 2249.0,1238.4 2205.7,1234.2 2191.2,1246.6 2180.9,1244.5 2154.1,1221.9" fill="#c4e2f5"/><polygon points="2182.0,1077.5 2204.0,1066.5 2220.5,1055.5 2237.0,1045.6 2253.1,1042.4 2261.4,1052.7 2284.0,1048.6 2350.0,1044.4 2358.3,1054.8 2368.6,1087.8 2360.4,1108.4 2370.7,1133.1 2385.1,1153.8 2364.5,1195.0 2368.6,1211.5 2360.4,1211.5 2339.7,1207.4 2312.9,1213.6 2294.4,1207.4 2273.7,1215.7 2267.5,1205.3 2259.3,1190.9 2238.7,1193.0 2226.3,1178.5 2199.5,1172.3 2201.5,1162.0 2191.2,1145.5 2191.2,1120.8 2180.9,1108.4 2183.0,1083.6" fill="#c0e0f4"/><polygon points="2273.7,1215.7 2294.4,1207.4 2312.9,1213.6 2339.7,1207.4 2360.4,1211.5 2358.3,1232.2 2341.8,1234.2 2325.3,1238.4 2306.7,1250.7 2288.2,1259.0 2263.4,1265.2 2255.2,1263.1 2249.0,1252.8 2249.0,1238.4 2267.5,1230.1" fill="#88d0e6"/><polygon points="2255.2,1263.1 2263.4,1265.2 2288.2,1259.0 2306.7,1250.7 2325.3,1238.4 2341.8,1234.2 2358.3,1238.4 2374.8,1246.6 2362.4,1263.1 2354.2,1296.1 2347.9,1305.0 2332.5,1313.1 2316.0,1315.3 2299.5,1325.2 2290.7,1330.7 2277.5,1332.9 2264.3,1327.4 2250.0,1318.6 2240.1,1313.1 2242.3,1309.8 2239.0,1301.0 2243.4,1294.4 2244.9,1285.0" fill="#5ebdd7"/><polygon points="2374.8,1246.6 2386.2,1242.0 2413.2,1241.0 2422.8,1245.8 2428.6,1238.1 2447.8,1230.4 2449.8,1223.7 2459.4,1219.8 2472.9,1234.3 2496.0,1253.5 2504.6,1269.0 2505.6,1290.1 2511.4,1299.8 2524.9,1301.7 2538.3,1295.0 2546.0,1297.8 2548.0,1311.3 2534.5,1317.1 2532.6,1324.8 2532.6,1340.2 2534.5,1353.7 2511.4,1349.8 2497.9,1348.9 2478.6,1357.5 2465.2,1371.0 2432.4,1374.9 2401.6,1376.8 2399.7,1369.1 2393.9,1359.5 2390.1,1353.7 2380.4,1359.5 2363.1,1351.8 2361.2,1340.2 2340.0,1324.8 2332.5,1313.1 2347.9,1305.0 2354.2,1296.1 2362.4,1263.1" fill="#c2e1f4"/><polygon points="2178.5,1316.4 2199.4,1318.6 2206.0,1312.0 2223.6,1307.6 2233.5,1303.2 2239.0,1301.0 2242.3,1309.8 2240.1,1313.1 2240.1,1316.4 2228.0,1324.1 2228.0,1334.0 2221.4,1340.6 2221.4,1348.3 2206.0,1347.2 2189.5,1350.5 2184.0,1345.0 2179.6,1341.7 2179.6,1334.0 2175.2,1324.1" fill="#e1e6f9"/><polygon points="2240.1,1313.1 2250.0,1318.6 2264.3,1327.4 2277.5,1332.9 2290.7,1330.7 2299.5,1325.2 2301.7,1331.8 2307.2,1356.0 2303.9,1358.2 2294.0,1353.8 2272.0,1354.9 2246.7,1356.0 2243.4,1359.3 2234.6,1356.0 2232.4,1369.2 2243.4,1383.5 2251.1,1394.5 2269.8,1409.9 2281.9,1424.2 2305.0,1439.6 2283.0,1428.6 2266.5,1419.8 2241.2,1408.8 2228.0,1397.8 2219.2,1386.8 2212.6,1375.8 2209.3,1358.2 2197.2,1354.9 2189.5,1369.2 2181.8,1352.7 2189.5,1350.5 2206.0,1347.2 2221.4,1348.3 2221.4,1340.6 2228.0,1334.0 2228.0,1324.1 2240.1,1316.4" fill="#8dd1e8"/><polygon points="2392.0,1384.5 2401.6,1376.8 2432.4,1374.9 2465.2,1371.0 2478.6,1357.5 2497.9,1348.9 2511.4,1349.8 2534.5,1353.7 2534.5,1363.3 2524.9,1371.0 2522.9,1388.3 2519.1,1398.0 2532.6,1409.5 2524.9,1415.3 2504.7,1431.2 2491.0,1432.5 2494.8,1437.4 2492.3,1443.6 2476.2,1449.8 2463.8,1448.6 2455.1,1444.9 2447.7,1446.1 2434.1,1452.3 2418.0,1457.2 2417.0,1440.3 2399.7,1428.8 2399.7,1411.5 2405.5,1401.8" fill="#5ab9d5"/><polygon points="2418.0,1457.2 2434.1,1452.3 2447.7,1446.1 2455.1,1444.9 2463.8,1448.6 2476.2,1449.8 2492.3,1443.6 2494.8,1437.4 2491.0,1432.5 2504.7,1431.2 2507.1,1437.4 2501.0,1444.9 2503.4,1453.5 2498.5,1462.2 2488.6,1459.7 2471.2,1461.0 2458.9,1465.9 2449.0,1473.3 2441.5,1475.8 2445.2,1483.2 2434.1,1490.7 2424.2,1484.5 2415.5,1488.2 2416.8,1499.3 2426.7,1510.5 2436.6,1524.1 2432.9,1532.8 2424.2,1540.2 2441.5,1544.0 2455.0,1550.0 2462.0,1556.0 2466.3,1566.0 2455.1,1562.5 2445.2,1560.0 2419.2,1558.8 2389.5,1562.5 2380.9,1551.3 2374.7,1541.4 2364.8,1536.5 2352.4,1529.0 2345.0,1522.9 2359.8,1509.2 2368.5,1501.8 2371.0,1485.7 2377.1,1479.5 2393.2,1470.9 2406.9,1467.1 2415.5,1459.7" fill="#bcdff3"/><polygon points="2395.7,1565.0 2419.2,1561.5 2445.2,1565.0 2440.3,1571.1 2449.0,1578.6 2453.9,1584.8 2444.0,1588.5 2436.6,1584.8 2442.8,1597.1 2449.0,1610.0 2406.9,1610.0 2404.4,1594.7 2393.2,1582.3 2394.5,1571.1" fill="#bcdff3"/><polygon points="2427.0,1540.5 2451.4,1542.7 2466.3,1551.3 2477.4,1556.3 2478.7,1560.0 2467.5,1557.0 2451.4,1549.5 2434.1,1545.0" fill="#bcdff3"/><polygon points="2028.2,1338.0 2067.4,1325.7 2075.6,1338.0 2100.4,1325.7 2110.7,1311.2 2109.5,1309.5 2140.0,1301.0 2146.6,1299.9 2151.0,1310.9 2162.0,1314.2 2178.5,1316.4 2175.2,1324.1 2179.6,1334.0 2179.6,1341.7 2173.0,1341.7 2155.4,1349.4 2149.9,1356.0 2151.0,1373.6 2154.3,1392.3 2168.6,1404.4 2182.9,1412.1 2190.6,1427.5 2200.5,1450.0 2214.0,1460.0 2223.3,1464.1 2247.0,1462.1 2250.1,1465.2 2244.0,1472.4 2245.0,1477.5 2262.5,1484.8 2274.9,1487.9 2284.2,1495.1 2298.6,1499.2 2300.7,1503.3 2312.0,1512.6 2313.1,1517.8 2311.0,1526.0 2303.8,1522.9 2300.7,1517.8 2297.6,1511.6 2283.2,1510.5 2279.0,1506.4 2272.8,1507.5 2266.7,1520.9 2263.6,1531.2 2264.6,1535.3 2281.1,1542.5 2283.2,1553.9 2282.1,1558.0 2270.8,1561.1 2268.7,1566.2 2269.7,1575.5 2261.5,1583.8 2259.4,1593.1 2250.1,1594.1 2248.1,1585.9 2252.2,1576.6 2251.2,1570.4 2259.4,1567.3 2259.4,1561.1 2255.3,1554.9 2252.2,1542.5 2247.0,1530.1 2240.9,1522.9 2234.7,1526.0 2223.3,1518.8 2224.4,1512.6 2218.2,1505.4 2209.9,1507.5 2209.9,1503.3 2203.7,1501.3 2193.4,1488.9 2187.7,1488.0 2173.3,1486.6 2144.4,1462.0 2127.0,1450.5 2111.2,1428.9 2104.0,1400.0 2094.2,1395.8 2069.4,1387.6 2044.7,1399.9 2026.1,1387.6 2026.1,1377.2 2022.0,1362.8 2032.3,1354.5" fill="#64bfd9"/><polygon points="2079.4,1491.7 2088.0,1499.6 2092.4,1514.0 2089.5,1527.0 2086.6,1558.8 2078.0,1557.4 2067.9,1567.5 2057.8,1558.8 2060.6,1530.0 2054.9,1509.7 2065.0,1502.5" fill="#64bfd9"/><polygon points="2164.6,1610.0 2171.8,1592.0 2180.0,1591.0 2186.2,1590.0 2198.6,1596.2 2221.3,1591.0 2232.6,1587.9 2244.0,1583.8 2235.7,1602.4 2235.7,1610.0" fill="#64bfd9"/><polygon points="1641.6,1368.5 1666.7,1360.8 1680.1,1356.0 1695.6,1366.6 1724.4,1370.4 1753.3,1385.8 1778.4,1386.8 1791.8,1391.6 1811.1,1398.4 1820.7,1399.3 1826.5,1407.0 1857.3,1424.4 1874.7,1424.4 1892.0,1434.0 1907.4,1441.7 1930.5,1441.7 1934.4,1449.4 1932.4,1461.0 1903.5,1476.4 1870.8,1484.0 1867.0,1493.7 1853.5,1503.3 1836.1,1524.5 1836.1,1541.8 1845.8,1555.3 1826.5,1565.0 1815.0,1588.0 1784.1,1603.5 1782.2,1610.0 1662.8,1610.0 1660.9,1588.0 1645.5,1572.7 1637.8,1568.8 1639.7,1553.4 1655.1,1541.8 1649.3,1528.4 1662.8,1513.0 1657.0,1499.5 1655.1,1487.9 1668.6,1487.9 1674.4,1476.4 1680.1,1449.4 1701.3,1434.0 1695.6,1422.4 1682.0,1418.6 1657.0,1412.8 1659.0,1407.0 1645.5,1407.0 1641.6,1403.2 1647.4,1387.8 1641.6,1374.3" fill="#e6e9fa"/><polygon points="1903.5,1530.0 1920.0,1523.0 1930.0,1526.0 1932.0,1535.0 1922.0,1545.0 1912.0,1540.0" fill="#e6e9fa"/><polygon points="1942.0,1525.0 1950.0,1524.0 1954.0,1530.0 1944.0,1530.0" fill="#e6e9fa"/><polygon points="1872.0,1554.0 1882.0,1549.0 1884.0,1553.0 1875.0,1557.0" fill="#e6e9fa"/><polygon points="1641.6,1409.0 1645.5,1407.0 1659.0,1407.0 1657.0,1412.8 1682.0,1418.6 1695.6,1422.4 1701.3,1434.0 1680.1,1449.4 1674.4,1476.4 1668.6,1487.9 1655.1,1487.9 1657.0,1499.5 1662.8,1513.0 1649.3,1528.4 1655.1,1541.8 1639.7,1553.4 1637.8,1568.8 1624.3,1570.7 1597.3,1563.0 1608.9,1538.0 1612.7,1522.6 1603.1,1514.9 1599.3,1505.3 1607.0,1486.0 1624.3,1464.8 1635.9,1445.6 1639.7,1422.4" fill="#bfe0f3"/><polygon points="1845.8,901.7 1876.8,905.4 1875.5,914.0 1850.8,928.9 1853.3,937.6 1891.6,941.3 1892.9,948.7 1875.5,973.5 1863.2,978.4 1853.3,988.3 1875.5,993.3 1885.4,1008.1 1887.9,1037.8 1905.2,1057.6 1902.8,1072.5 1911.4,1087.3 1907.7,1099.7 1930.0,1102.2 1935.0,1117.0 1917.6,1136.8 1910.2,1146.7 1922.6,1151.7 1925.0,1159.1 1897.8,1165.3 1865.6,1161.6 1838.4,1159.1 1813.7,1166.5 1779.0,1169.0 1776.5,1165.3 1803.8,1149.2 1818.6,1139.3 1835.9,1141.8 1843.4,1134.4 1823.6,1129.4 1818.6,1117.0 1828.5,1102.2 1823.6,1089.8 1816.1,1084.9 1826.0,1075.0 1843.4,1072.5 1853.3,1057.6 1855.7,1050.2 1848.3,1037.8 1853.3,1023.0 1835.9,1023.0 1821.1,1018.0 1823.6,1008.1 1828.5,993.3 1818.6,993.3 1813.7,998.2 1803.8,988.3 1818.6,978.4 1823.6,966.0 1813.7,958.6 1818.6,938.8 1828.5,921.5 1838.4,914.0" fill="#7ecae2"/><polygon points="1751.8,1005.6 1764.2,998.2 1784.0,995.7 1798.8,1003.2 1806.2,1015.5 1808.7,1030.4 1793.9,1040.3 1788.9,1052.7 1788.9,1072.5 1779.0,1089.8 1764.2,1094.8 1732.0,1102.2 1704.8,1102.2 1697.3,1087.3 1699.8,1077.4 1717.1,1072.5 1712.2,1060.1 1717.1,1037.8 1719.6,1023.0 1727.0,1015.5 1741.9,1018.0" fill="#7ecae2"/><polygon points="2708.0,1608.0 2722.0,1595.0 2742.0,1590.0 2752.0,1578.0 2760.0,1562.0 2756.0,1580.0 2748.0,1594.0 2738.0,1608.0" fill="#5ab9d5"/><polygon points="1813.0,902.0 1826.0,897.0 1822.0,907.0 1812.0,910.0" fill="#7ecae2"/><polygon points="1797.0,925.0 1803.0,921.0 1801.0,935.0 1794.0,941.0" fill="#7ecae2"/><polygon points="1878.0,886.0 1886.0,884.0 1884.0,892.0 1877.0,894.0" fill="#7ecae2"/><polygon points="1914.0,842.0 1920.0,840.0 1918.0,858.0 1913.0,868.0" fill="#7ecae2"/><polygon points="2247.0,944.0 2254.0,938.0 2254.0,955.0 2246.0,963.0" fill="#6ac3dc"/><polygon points="2219.0,968.0 2222.0,960.0 2220.0,985.0 2216.0,988.0" fill="#6ac3dc"/><polygon points="2186.4,1033.5 2193.0,1036.8 2191.9,1040.0 2186.4,1037.9" fill="#62bfd9"/><polygon points="2503.4,1513.0 2514.0,1504.3 2524.5,1514.0 2512.0,1516.7" fill="#bcdff3"/><polygon points="2508.4,1533.0 2516.0,1531.5 2518.3,1544.0 2512.0,1546.4" fill="#bcdff3"/><polygon points="2461.3,1469.0 2466.0,1467.0 2467.5,1473.0 2462.0,1474.6" fill="#bcdff3"/><polygon points="2478.7,1492.0 2486.0,1489.4 2488.6,1495.0 2481.0,1496.9" fill="#bcdff3"/><polygon points="2435.3,1493.0 2441.0,1491.9 2445.2,1500.0 2438.0,1501.8" fill="#bcdff3"/><polygon points="2446.0,1490.0 2452.0,1489.0 2453.0,1497.0 2448.0,1497.0" fill="#bcdff3"/><polygon points="2499.0,1572.0 2508.0,1569.0 2509.0,1574.0 2500.0,1576.0" fill="#bcdff3"/><polygon points="2537.0,1552.0 2548.0,1548.0 2546.0,1555.0 2538.0,1556.0" fill="#bcdff3"/><polygon points="2469.0,1585.0 2474.0,1582.0 2476.0,1590.0 2470.0,1591.0" fill="#bcdff3"/><polygon points="2485.0,1592.0 2490.0,1590.0 2491.0,1597.0 2486.0,1598.0" fill="#bcdff3"/><polygon points="2510.0,1588.0 2514.0,1585.0 2516.0,1592.0 2511.0,1593.0" fill="#bcdff3"/><polygon points="2528.0,1598.0 2535.0,1593.0 2538.0,1598.0 2531.0,1603.0" fill="#bcdff3"/><polyline points="1756,1003 1764.2,1015.5 1761.7,1025.4 1779,1025.4 1786.4,1035.3 1796.3,1037.8 1808.7,1030.4" fill="none"/></g><text x="2164" y="736" font-family="Liberation Sans" font-weight="bold" font-size="23" fill="#000" stroke="#fff" stroke-width="4" stroke-linejoin="round" paint-order="stroke">Sweden</text><text x="2297" y="779.5" font-family="Liberation Sans" font-weight="bold" font-size="23" fill="#000" stroke="#fff" stroke-width="4" stroke-linejoin="round" paint-order="stroke">Finland</text><text x="2322.9" y="905.9" font-family="Liberation Sans" font-weight="bold" font-size="23" fill="#000" stroke="#fff" stroke-width="4" stroke-linejoin="round" paint-order="stroke">Estonia</text><text x="2348.7" y="960" font-family="Liberation Sans" font-weight="bold" font-size="23" fill="#000" stroke="#fff" stroke-width="4" stroke-linejoin="round" paint-order="stroke">Latvia</text><text x="2310.5" y="1019.3" font-family="Liberation Sans" font-weight="bold" font-size="23" fill="#000" stroke="#fff" stroke-width="4" stroke-linejoin="round" paint-order="stroke">Lithuania</text><text x="2039.2" y="1009" font-family="Liberation Sans" font-weight="bold" font-size="23" fill="#000" stroke="#fff" stroke-width="4" stroke-linejoin="round" paint-order="stroke">Denmark</text><text x="1715.4" y="1065.8" font-family="Liberation Sans" font-weight="bold" font-size="23" fill="#000" stroke="#fff" stroke-width="4" stroke-linejoin="round" paint-order="stroke">Ireland</text><text x="1787.7" y="1127.7" font-family="Liberation Sans" font-weight="bold" font-size="23" fill="#000" stroke="#fff" stroke-width="4" stroke-linejoin="round" paint-order="stroke">United Kingdom</text><text x="1942.6" y="1185.8" font-family="Liberation Sans" font-weight="bold" font-size="23" fill="#000" stroke="#fff" stroke-width="4" stroke-linejoin="round" paint-order="stroke">Belgium</text><text x="2050.9" y="1181.4" font-family="Liberation Sans" font-weight="bold" font-size="23" fill="#000" stroke="#fff" stroke-width="4" stroke-linejoin="round" paint-order="stroke">Germany</text><text x="1888.3" y="1331.8" font-family="Liberation Sans" font-weight="bold" font-size="23" fill="#000" stroke="#fff" stroke-width="4" stroke-linejoin="round" paint-order="stroke">France</text><text x="1601.2" y="1471.6" font-family="Liberation Sans" font-weight="bold" font-size="23" fill="#000" stroke="#fff" stroke-width="4" stroke-linejoin="round" paint-order="stroke">Portugal</text><text x="1734" y="1502" font-family="Liberation Sans" font-weight="bold" font-size="23" fill="#000" stroke="#fff" stroke-width="4" stroke-linejoin="round" paint-order="stroke">Spain</text><text x="2257.2" y="1135.2" font-family="Liberation Sans" font-weight="bold" font-size="23" fill="#000" stroke="#fff" stroke-width="4" stroke-linejoin="round" paint-order="stroke">Poland</text><text x="2121" y="1215.7" font-family="Liberation Sans" font-weight="bold" font-size="23" fill="#000" stroke="#fff" stroke-width="4" stroke-linejoin="round" paint-order="stroke">Czech Republic</text><text x="2160.3" y="1284.8" font-family="Liberation Sans" font-weight="bold" font-size="23" fill="#000" stroke="#fff" stroke-width="4" stroke-linejoin="round" paint-order="stroke">Austria</text><text x="2262.5" y="1291" font-family="Liberation Sans" font-weight="bold" font-size="23" fill="#000" stroke="#fff" stroke-width="4" stroke-linejoin="round" paint-order="stroke">Hungary</text><text x="2378.5" y="1313.5" font-family="Liberation Sans" font-weight="bold" font-size="23" fill="#000" stroke="#fff" stroke-width="4" stroke-linejoin="round" paint-order="stroke">Romania</text><text x="2238.9" y="1351.5" font-family="Liberation Sans" font-weight="bold" font-size="23" fill="#000" stroke="#fff" stroke-width="4" stroke-linejoin="round" paint-order="stroke">Croatia</text><text x="2125" y="1435.5" font-family="Liberation Sans" font-weight="bold" font-size="23" fill="#000" stroke="#fff" stroke-width="4" stroke-linejoin="round" paint-order="stroke">Italy</text><text x="2420.9" y="1419.2" font-family="Liberation Sans" font-weight="bold" font-size="23" fill="#000" stroke="#fff" stroke-width="4" stroke-linejoin="round" paint-order="stroke">Bulgaria</text><text x="2357.4" y="1528.6" font-family="Liberation Sans" font-weight="bold" font-size="23" fill="#000" stroke="#fff" stroke-width="4" stroke-linejoin="round" paint-order="stroke">Greece</text><text x="2649" y="1589.5" font-family="Liberation Sans" font-weight="bold" font-size="23" fill="#000" stroke="#fff" stroke-width="4" stroke-linejoin="round" paint-order="stroke">Northern</text><rect x="1597.5" y="1591.5" width="55" height="40" rx="6" fill="#fff" stroke="#dcdcdc" stroke-width="2"/><circle cx="1624" cy="1605" r="3.5" fill="#444"/></svg></body></html>
